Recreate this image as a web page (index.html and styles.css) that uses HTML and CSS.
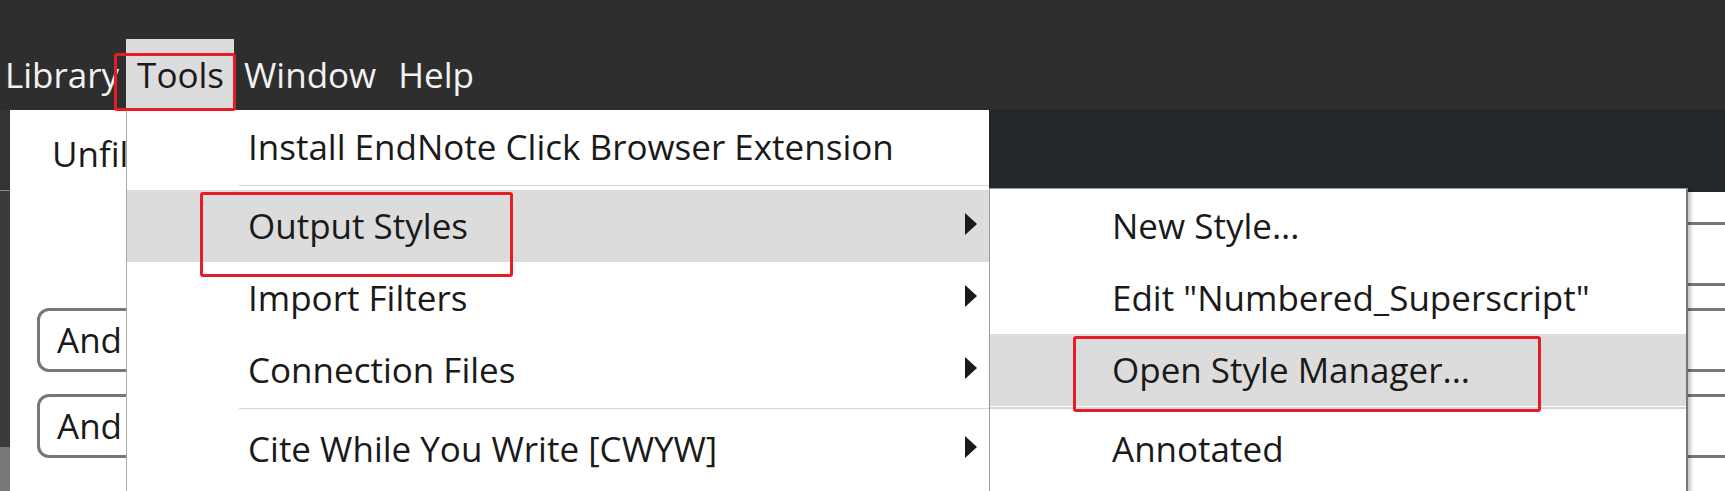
FILE: index.html
```html
<!DOCTYPE html>
<html lang="en">
<head>
<meta charset="utf-8">
<title>EndNote Tools menu</title>
<link rel="stylesheet" href="styles.css">
</head>
<body>
<div class="app">
  <header class="topbar">
    <nav class="menubar">
      <span class="mb-item mb-library">Library</span>
      <span class="mb-item mb-tools active">Tools</span>
      <span class="mb-item mb-window">Window</span>
      <span class="mb-item">Help</span>
    </nav>
  </header>
  <div class="body">
    <div class="strip">
      <div class="strip-a"></div>
      <div class="strip-b"></div>
      <div class="strip-c"></div>
    </div>
    <main class="main">
      <div class="head">
        <div class="head-left">Unfiled</div>
        <div class="head-right"></div>
      </div>
      <div class="rows">
        <div class="row"><div class="bool blank"></div><div class="field"></div></div>
        <div class="row"><div class="bool">And</div><div class="field"></div></div>
        <div class="row"><div class="bool">And</div><div class="field"></div></div>
      </div>
    </main>
  </div>

  <div class="menu menu-tools">
    <div class="item">Install EndNote Click Browser Extension</div>
    <div class="sep"></div>
    <div class="item hl">Output Styles<span class="arrow"></span></div>
    <div class="item">Import Filters<span class="arrow"></span></div>
    <div class="item">Connection Files<span class="arrow"></span></div>
    <div class="sep"></div>
    <div class="item">Cite While You Write [CWYW]<span class="arrow"></span></div>
  </div>

  <div class="menu menu-sub">
    <div class="item">New Style...</div>
    <div class="item">Edit "Numbered_Superscript"</div>
    <div class="item hl">Open Style Manager...</div>
    <div class="sep"></div>
    <div class="item">Annotated</div>
  </div>

  <div class="mark mark-tools"></div>
  <div class="mark mark-output"></div>
  <div class="mark mark-open"></div>
</div>
</body>
</html>
```

FILE: styles.css
```css
html, body {
  margin: 0;
  padding: 0;
}

body {
  width: 1725px;
  height: 491px;
  overflow: hidden;
  background: #ffffff;
  font-family: "Open Sans", "Noto Sans", sans-serif;
  font-size: 35px;
  color: #1a1a1a;
}

.app {
  position: relative;
  width: 1725px;
  height: 491px;
  overflow: hidden;
}

/* ---------- top menubar ---------- */
.topbar {
  height: 110px;
  background: #2e2e2e;
  display: flex;
  align-items: flex-end;
}

.menubar {
  display: flex;
  margin-left: -5px;
}

.mb-item {
  height: 71px;
  line-height: 71px;
  padding: 0 10px;
  color: #f2f2f2;
  white-space: nowrap;
}

.mb-library {
  padding-right: 7px;
}

.mb-tools {
  padding: 0 10px 0 11px;
}

.mb-window {
  padding-right: 12px;
}

.mb-item.active {
  background: #dcdcdc;
  color: #1a1a1a;
}

/* ---------- background window ---------- */
.body {
  display: flex;
  height: 381px;
}

.strip {
  width: 10px;
  display: flex;
  flex-direction: column;
}

.strip-a {
  height: 80px;
  background: #333333;
  border-bottom: 1px solid #8a8a8a;
}

.strip-b {
  flex: 1;
  background: #3a3a3a;
}

.strip-c {
  height: 44px;
  background: #777777;
}

.main {
  flex: 1;
  min-width: 0;
  display: flex;
  flex-direction: column;
}

.head {
  height: 82px;
  display: flex;
}

.head-left {
  width: 490px;
  box-sizing: border-box;
  padding: 6px 0 0 42px;
  line-height: 76px;
  white-space: nowrap;
  overflow: hidden;
}

.head-right {
  flex: 1;
  background: #24272a;
}

.rows {
  display: flex;
  flex-direction: column;
  gap: 22px;
  margin-top: 30px;
}

.row {
  display: flex;
  gap: 20px;
  height: 64px;
}

.bool {
  width: 360px;
  margin-left: 27px;
  box-sizing: border-box;
  border: 3px solid #777777;
  border-radius: 12px;
  padding-left: 17px;
  line-height: 58px;
}

.bool.blank {
  border-color: transparent;
}

.field {
  flex: 1;
  margin-right: -40px;
  border: 3px solid #777777;
  border-radius: 12px;
}

/* ---------- menus ---------- */
.menu {
  position: absolute;
  background: #ffffff;
}

.menu-tools {
  left: 126px;
  top: 110px;
  width: 862px;
  height: 400px;
  border-left: 1px solid #a8a8a8;
  padding-top: 1px;
}

.menu-sub {
  left: 989px;
  top: 188px;
  width: 696px;
  height: 320px;
  border: 1px solid #9a9a9a;
  border-right: 2px solid #777777;
  padding-top: 1px;
  box-shadow: 3px 2px 3px rgba(0, 0, 0, 0.22);
}

.item {
  position: relative;
  height: 72px;
  line-height: 72px;
  padding-left: 121px;
  white-space: nowrap;
}

.menu-sub .item {
  padding-left: 122px;
}

.item.hl {
  background: #dcdcdc;
}

.arrow {
  position: absolute;
  right: 12px;
  top: 23px;
  width: 0;
  height: 0;
  border-left: 12px solid #1a1a1a;
  border-top: 11.5px solid transparent;
  border-bottom: 11.5px solid transparent;
}

.sep {
  height: 1px;
  margin: 2px 0 4px 112px;
  background: #d6d6d6;
}

.menu-sub .sep {
  margin-left: 0;
  height: 2px;
  margin-top: 1px;
}

/* ---------- red annotation boxes ---------- */
.mark {
  position: absolute;
  border: 3px solid #e81c26;
  border-radius: 3px;
}

.mark-tools {
  left: 114px;
  top: 53px;
  width: 116px;
  height: 52px;
}

.mark-output {
  left: 200px;
  top: 192px;
  width: 307px;
  height: 79px;
}

.mark-open {
  left: 1073px;
  top: 336px;
  width: 462px;
  height: 70px;
}
```
